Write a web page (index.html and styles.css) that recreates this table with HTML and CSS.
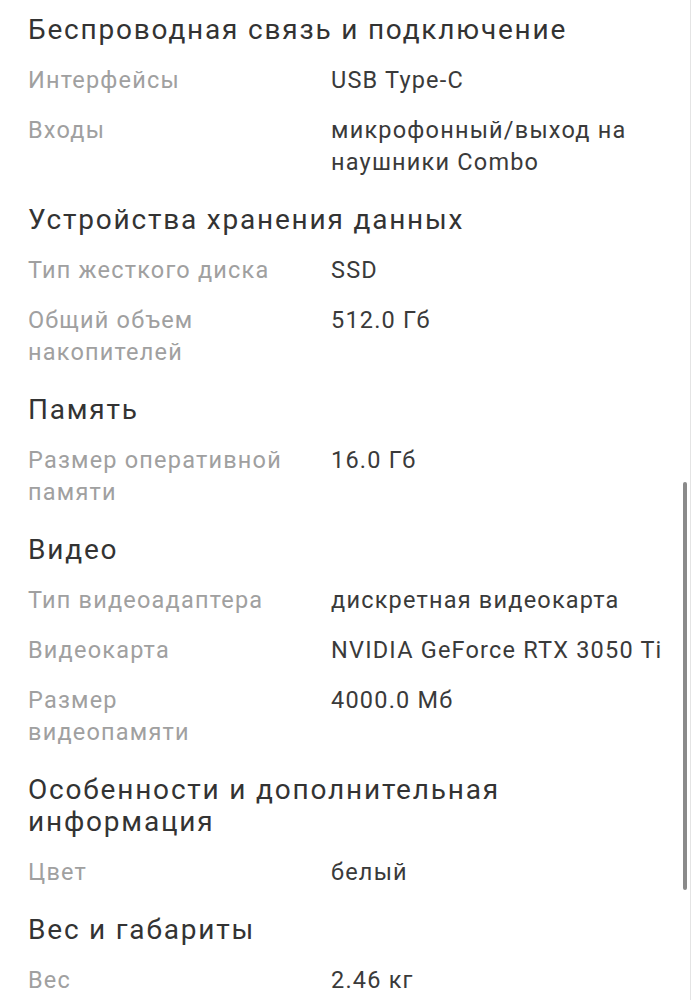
FILE: index.html
```html
<!DOCTYPE html>
<html lang="ru">
<head>
<meta charset="utf-8">
<title>Характеристики</title>
<link rel="stylesheet" href="styles.css">
</head>
<body>
<main class="specs">
  <section class="group">
    <h2 class="group-title">Беспроводная связь и подключение</h2>
    <div class="row"><div class="label">Интерфейсы</div><div class="value">USB Type-C</div></div>
    <div class="row"><div class="label">Входы</div><div class="value">микрофонный/выход на наушники Combo</div></div>
  </section>
  <section class="group">
    <h2 class="group-title">Устройства хранения данных</h2>
    <div class="row"><div class="label">Тип жесткого диска</div><div class="value">SSD</div></div>
    <div class="row"><div class="label">Общий объем накопителей</div><div class="value">512.0 Гб</div></div>
  </section>
  <section class="group">
    <h2 class="group-title">Память</h2>
    <div class="row"><div class="label">Размер оперативной памяти</div><div class="value">16.0 Гб</div></div>
  </section>
  <section class="group">
    <h2 class="group-title">Видео</h2>
    <div class="row"><div class="label">Тип видеоадаптера</div><div class="value">дискретная видеокарта</div></div>
    <div class="row"><div class="label">Видеокарта</div><div class="value">NVIDIA GeForce RTX 3050 Ti</div></div>
    <div class="row"><div class="label">Размер видеопамяти</div><div class="value">4000.0 Мб</div></div>
  </section>
  <section class="group">
    <h2 class="group-title">Особенности и дополнительная информация</h2>
    <div class="row"><div class="label">Цвет</div><div class="value">белый</div></div>
  </section>
  <section class="group">
    <h2 class="group-title">Вес и габариты</h2>
    <div class="row"><div class="label">Вес</div><div class="value">2.46 кг</div></div>
  </section>
</main>
<div class="scrollbar"></div>
<div class="edge"></div>
</body>
</html>
```

FILE: styles.css
```css
html, body {
  margin: 0;
  padding: 0;
  background: #ffffff;
}
body {
  font-family: Roboto, "Noto Sans", sans-serif;
  color: #3a3a3a;
  overflow: hidden;
}
.specs {
  padding: 14px 28px 0 28px;
  display: flex;
  flex-direction: column;
  gap: 26px;
  width: 637px;
}
.group {
  display: flex;
  flex-direction: column;
  gap: 18px;
}
.group-title {
  margin: 0;
  font-size: 28px;
  line-height: 32px;
  font-weight: 400;
  letter-spacing: 1.8px;
  color: #333333;
}
.row {
  display: grid;
  grid-template-columns: 255px 1fr;
  column-gap: 48px;
  font-size: 23.5px;
  line-height: 32px;
  letter-spacing: 1.2px;
}
.label {
  color: #a0a0a0;
}
.value {
  color: #3a3a3a;
}
.scrollbar {
  position: fixed;
  left: 683px;
  top: 482px;
  width: 4px;
  height: 408px;
  border-radius: 2px;
  background: #8a8a8a;
}
.edge {
  position: fixed;
  left: 690px;
  top: 0;
  width: 1px;
  height: 100%;
  background: #e4e4e4;
}
```
